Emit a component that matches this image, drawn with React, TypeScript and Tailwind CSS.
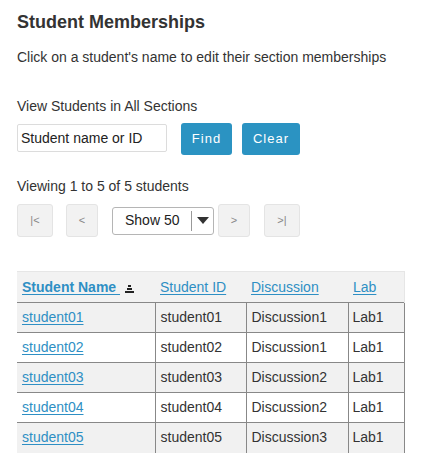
import React from "react"

const students = [
  { name: "student01", id: "student01", discussion: "Discussion1", lab: "Lab1" },
  { name: "student02", id: "student02", discussion: "Discussion1", lab: "Lab1" },
  { name: "student03", id: "student03", discussion: "Discussion2", lab: "Lab1" },
  { name: "student04", id: "student04", discussion: "Discussion2", lab: "Lab1" },
  { name: "student05", id: "student05", discussion: "Discussion3", lab: "Lab1" },
]

function SortIcon() {
  return (
    <svg width="9" height="8" viewBox="0 0 9 8" className="inline-block ml-[5px] align-[-1px]">
      <rect x="3" y="0" width="3" height="2" fill="#222" />
      <rect x="2" y="3" width="5" height="2" fill="#222" />
      <rect x="0" y="6" width="9" height="2" fill="#222" />
    </svg>
  )
}

function PagerButton({ label, w }: { label: string; w: string }) {
  return (
    <button
      className={`${w} h-[33px] bg-[#f2f2f2] border border-[#e4e4e4] rounded-[3px] text-[11px] text-[#888] flex items-center justify-center`}
    >
      {label}
    </button>
  )
}

export default function App() {
  return (
    <div
      className="w-[430px] h-[473px] bg-white text-[#333] text-[14px] px-[17px] pt-[11px]"
      style={{ fontFamily: '"Liberation Sans", Arial, sans-serif' }}
    >
      <h1 className="text-[18px] font-bold leading-[22px] text-[#333]">Student Memberships</h1>
      <p className="mt-[14px] leading-[20px]">Click on a student's name to edit their section memberships</p>

      <div className="mt-[29px] leading-[20px]">View Students in All Sections</div>

      <div className="mt-[7px] flex items-start">
        <div className="mt-[1px] w-[150px] h-[28px] border border-[#dcdcdc] rounded-[2px] px-[3px] flex items-center text-[14px] text-[#222]">
          Student name or ID
        </div>
        <button className="ml-[14px] w-[51px] h-[32px] bg-[#2b93c2] rounded-[3px] text-white text-[13px] tracking-[1px]">
          Find
        </button>
        <button className="ml-[10px] w-[58px] h-[32px] bg-[#2b93c2] rounded-[3px] text-white text-[13px] tracking-[1px]">
          Clear
        </button>
      </div>

      <div className="mt-[21px] leading-[20px]">Viewing 1 to 5 of 5 students</div>

      <div className="mt-[8px] flex items-center">
        <PagerButton label="|<" w="w-[36px]" />
        <div className="ml-[13px]">
          <PagerButton label="<" w="w-[32px]" />
        </div>
        <div className="ml-[14px] w-[102px] h-[28px] border border-[#b5b5b5] rounded-[3px] flex items-center">
          <span className="pl-[12px] w-[78px] text-[14px] text-[#222]">Show 50</span>
          <span className="h-[20px] border-l border-[#999]" />
          <svg width="12" height="7" viewBox="0 0 12 7" className="ml-[5px]">
            <polygon points="0,0 12,0 6,7" fill="#333" />
          </svg>
        </div>
        <div className="ml-[4px]">
          <PagerButton label=">" w="w-[32px]" />
        </div>
        <div className="ml-[14px]">
          <PagerButton label=">|" w="w-[36px]" />
        </div>
      </div>

      <table className="mt-[34px] w-[388px] border-collapse text-[14px]">
        <thead>
          <tr className="bg-[#f2f2f2] h-[31px]">
            <th className="w-[138px] text-left font-bold pl-[5px] border-t border-[#e6e6e6]">
              <span className="text-[#2e8fc4] underline underline-offset-2">Student Name </span>
              <SortIcon />
            </th>
            <th className="w-[91px] text-left font-normal pl-[5px] border-t border-[#e6e6e6]">
              <span className="text-[#2e8fc4] underline underline-offset-2">Student ID</span>
            </th>
            <th className="w-[102px] text-left font-normal pl-[5px] border-t border-[#e6e6e6]">
              <span className="text-[#2e8fc4] underline underline-offset-2">Discussion</span>
            </th>
            <th className="text-left font-normal pl-[5px] border-t border-r border-[#e6e6e6]">
              <span className="text-[#2e8fc4] underline underline-offset-2">Lab</span>
            </th>
          </tr>
        </thead>
        <tbody>
          {students.map((s, i) => (
            <tr key={s.name} className={`h-[30px] ${i % 2 === 0 ? "bg-[#f1f1f1]" : "bg-white"}`}>
              <td className="pl-[5px] border-t border-[#888]">
                <a className="text-[#2e8fc4] underline underline-offset-2">{s.name}</a>
              </td>
              <td className="pl-[5px] border-t border-l border-[#888]">{s.id}</td>
              <td className="pl-[5px] border-t border-l border-[#888]">{s.discussion}</td>
              <td className="pl-[4px] border-t border-l border-r border-[#888]">{s.lab}</td>
            </tr>
          ))}
        </tbody>
      </table>
    </div>
  )
}
